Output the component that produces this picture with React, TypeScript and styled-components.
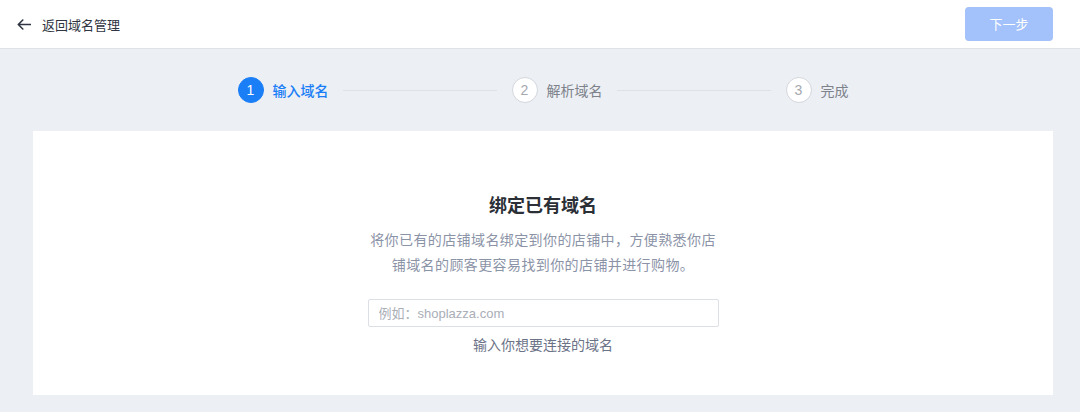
import React from "react";
import styled, { createGlobalStyle } from "styled-components";

const GlobalStyle = createGlobalStyle`
  html, body { margin: 0; padding: 0; }
  body {
    background: #eceff4;
    font-family: "Liberation Sans", "Noto Sans CJK SC", sans-serif;
    -webkit-font-smoothing: antialiased;
  }
`;

const Page = styled.div`
  min-height: 412px;
  background: #eceff4;
`;

const Header = styled.header`
  height: 48px;
  background: #fff;
  border-bottom: 1px solid #dfe2e8;
  display: flex;
  align-items: center;
  justify-content: space-between;
  padding: 0 27px 0 17px;
`;

const BackLink = styled.a`
  display: flex;
  align-items: center;
  gap: 11px;
  color: #2f3542;
  font-size: 13px;
  cursor: pointer;
`;

const NextButton = styled.button`
  width: 88px;
  height: 34px;
  border: none;
  border-radius: 4px;
  background: #a3c1fb;
  color: #fff;
  font-size: 13px;
  font-family: inherit;
  margin-top: -1px;
`;

const Steps = styled.div`
  display: flex;
  align-items: center;
  justify-content: center;
  padding: 28px 0 28px 6px;
`;

const Step = styled.div`
  display: flex;
  align-items: center;
  gap: 9px;
`;

const Circle = styled.div<{ $active?: boolean }>`
  width: 26px;
  height: 26px;
  box-sizing: border-box;
  border-radius: 50%;
  display: flex;
  align-items: center;
  justify-content: center;
  font-size: 14px;
  background: ${(p) => (p.$active ? "#1a7ef6" : "#fff")};
  border: 1px solid ${(p) => (p.$active ? "#1a7ef6" : "#d3d6dc")};
  color: ${(p) => (p.$active ? "#fff" : "#a5a9b0")};
`;

const StepLabel = styled.span<{ $active?: boolean }>`
  font-size: 14px;
  color: ${(p) => (p.$active ? "#1a7ef6" : "#7d828b")};
  font-weight: ${(p) => (p.$active ? 500 : 400)};
`;

const Connector = styled.div`
  width: 154px;
  height: 1px;
  background: #dde1e7;
  margin: 0 15px 0 14px;
`;

const Card = styled.section`
  margin: 0 27px 0 33px;
  height: 264px;
  background: #fff;
  display: flex;
  flex-direction: column;
  align-items: center;
  padding-top: 62px;
  box-sizing: border-box;
`;

const Title = styled.h2`
  margin: 0;
  font-size: 18px;
  line-height: 26px;
  font-weight: 700;
  color: #2b2f36;
`;

const Description = styled.p`
  margin: 9px 0 0;
  max-width: 346px;
  text-align: center;
  font-size: 14px;
  line-height: 25px;
  color: #8b93a7;
  letter-spacing: 0.4px;
`;

const Input = styled.input`
  margin-top: 21px;
  width: 351px;
  height: 28px;
  box-sizing: border-box;
  border: 1px solid #dcdfe5;
  border-radius: 2px;
  padding: 0 10px;
  font-size: 13px;
  font-family: inherit;
  color: #333;
  outline: none;
  &::placeholder {
    color: #a9aeb7;
  }
`;

const Helper = styled.div`
  margin-top: 8px;
  font-size: 14px;
  line-height: 20px;
  color: #6c7387;
`;

const BackArrow = () => (
  <svg width="14" height="11" viewBox="0 0 14 11" fill="none">
    <path
      d="M13.5 5.5H1.5M5.8 1L1.3 5.5L5.8 10"
      stroke="#2f3542"
      strokeWidth="1.6"
      strokeLinecap="round"
      strokeLinejoin="round"
    />
  </svg>
);

export default function App() {
  return (
    <Page>
      <GlobalStyle />
      <Header>
        <BackLink>
          <BackArrow />
          返回域名管理
        </BackLink>
        <NextButton>下一步</NextButton>
      </Header>
      <Steps>
        <Step>
          <Circle $active>1</Circle>
          <StepLabel $active>输入域名</StepLabel>
        </Step>
        <Connector />
        <Step>
          <Circle>2</Circle>
          <StepLabel>解析域名</StepLabel>
        </Step>
        <Connector />
        <Step>
          <Circle>3</Circle>
          <StepLabel>完成</StepLabel>
        </Step>
      </Steps>
      <Card>
        <Title>绑定已有域名</Title>
        <Description>
          将你已有的店铺域名绑定到你的店铺中，方便熟悉你店铺域名的顾客更容易找到你的店铺并进行购物。
        </Description>
        <Input placeholder="例如：shoplazza.com" />
        <Helper>输入你想要连接的域名</Helper>
      </Card>
    </Page>
  );
}
